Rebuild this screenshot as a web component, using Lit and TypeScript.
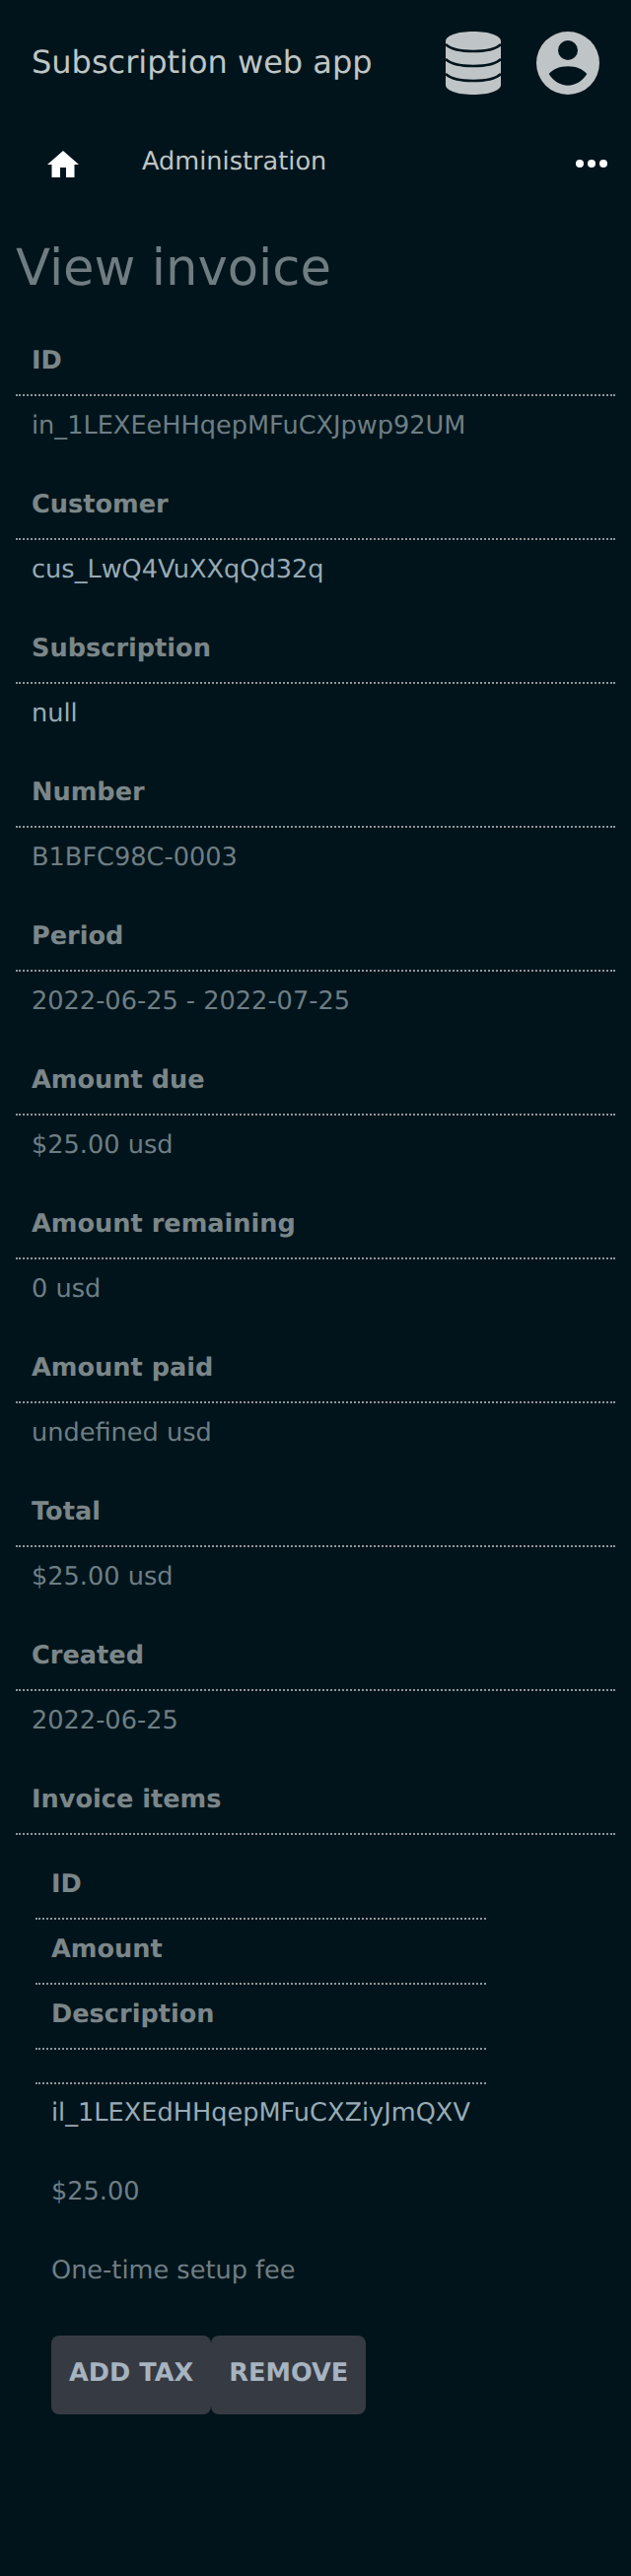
import { LitElement, html, css } from "lit";
import { customElement } from "lit/decorators.js";

const rows: [string, string, boolean?][] = [
  ["ID", "in_1LEXEeHHqepMFuCXJpwp92UM"],
  ["Customer", "cus_LwQ4VuXXqQd32q", true],
  ["Subscription", "null", true],
  ["Number", "B1BFC98C-0003"],
  ["Period", "2022-06-25 - 2022-07-25"],
  ["Amount due", "$25.00 usd"],
  ["Amount remaining", "0 usd"],
  ["Amount paid", "undefined usd"],
  ["Total", "$25.00 usd"],
  ["Created", "2022-06-25"],
];

@customElement("app-root")
export class AppRoot extends LitElement {
  static styles = css`
    :host {
      display: block;
      height: 2614px;
      background: #01141b;
      font-family: "DejaVu Sans", sans-serif;
      font-size: 25.6px;
      text-rendering: geometricPrecision;
      overflow: hidden;
    }
    header {
      display: flex;
      align-items: center;
      height: 64px;
      padding: 32px 32px 0;
      color: #bfc5c6;
    }
    .brand { flex: 1; font-size: 32px; line-height: 62px; margin-bottom: 2px; }
    .db { width: 56px; height: 64px; margin-right: 36px; }
    .db path { fill: #bfc5c6; }
    .db .cut { fill: none; stroke: #01141b; stroke-width: 2.6; }
    .user { width: 64px; height: 64px; fill: #bfc5c6; }
    nav {
      display: flex;
      align-items: center;
      height: 64px;
      margin-top: 38px;
      padding: 0 24px 0 48px;
      color: #bfc5c6;
    }
    .home { width: 32px; height: 27px; fill: #fff; margin-right: 64px; }
    .admin { flex: 1; margin-bottom: 4px; }
    .more { width: 32px; height: 8px; fill: #fff; }
    h1 {
      margin: 38px 0 28px 16px;
      font-size: 51.2px;
      font-weight: 400;
      line-height: 72px;
      color: #6f7c81;
    }
    dl { margin: 0 16px; }
    dt {
      padding: 11px 16px 15px;
      line-height: 38px;
      font-weight: 700;
      color: #7b8689;
      border-bottom: 2px dotted #8d979b;
    }
    dd {
      margin: 0;
      padding: 11px 16px 31px;
      line-height: 38px;
      color: #6f7e84;
    }
    dd.hi { color: #98abb6; }
    .items { margin: 20px 0 0 36px; width: fit-content; }
    .items .spacer { height: 33px; padding: 0; border-bottom: 2px dotted #8d979b; }
    .items dd { padding: 10px 16px 32px; }
    .items dd:first-of-type { color: #98abb6; }
    .actions { display: flex; margin: 15px 0 0 52px; }
    button {
      height: 80px;
      padding: 0 18px 4px;
      border: 0;
      border-radius: 8px;
      background: #363a42;
      color: #a6b3c0;
      font: 700 25.6px "DejaVu Sans", sans-serif;
      text-rendering: geometricPrecision;
      text-transform: uppercase;
    }
  `;

  render() {
    return html`
      <header>
        <div class="brand">Subscription web app</div>
        <svg class="db" viewBox="0 0 56 64">
          <path d="M0 10C0 4 12 0 28 0s28 4 28 10V54c0 6-12 10-28 10S0 60 0 54z"/>
          <path class="cut" d="M0 13C4 17 14 20 28 20S52 17 56 13"/>
          <path class="cut" d="M0 28C4 32 14 35 28 35S52 32 56 28"/>
          <path class="cut" d="M0 43C4 47 14 50 28 50S52 47 56 43"/>
        </svg>
        <svg class="user" viewBox="0 0 64 64"><path fill-rule="evenodd" d="M32 0a32 32 0 1 1 0 64a32 32 0 0 1 0-64zM32 9a10 10 0 1 0 0 20a10 10 0 0 0 0-20zM12.700 43C17 38 24 35.300 32 35.300S47 38 51.300 43C47 50 40 54.700 32 54.700S17 50 12.700 43z"/></svg>
      </header>
      <nav>
        <svg class="home" viewBox="0 0 32 27"><path d="M16 0 L32 14 H27.500 V27 H19 V17 H13 V27 H4.500 V14 H0 Z"/></svg>
        <span class="admin">Administration</span>
        <svg class="more" viewBox="0 0 32 8"><circle cx="4" cy="4" r="4"/><circle cx="16" cy="4" r="4"/><circle cx="28" cy="4" r="4"/></svg>
      </nav>
      <h1>View invoice</h1>
      <dl>
        ${rows.map(
          ([k, v, hi]) => html`<dt>${k}</dt><dd class=${hi ? "hi" : ""}>${v}</dd>`
        )}
        <dt>Invoice items</dt>
      </dl>
      <dl class="items">
        <dt>ID</dt>
        <dt>Amount</dt>
        <dt>Description</dt>
        <dt class="spacer"></dt>
        <dd>il_1LEXEdHHqepMFuCXZiyJmQXV</dd>
        <dd>$25.00</dd>
        <dd>One-time setup fee</dd>
      </dl>
      <div class="actions">
        <button>Add tax</button>
        <button>Remove</button>
      </div>
    `;
  }
}
